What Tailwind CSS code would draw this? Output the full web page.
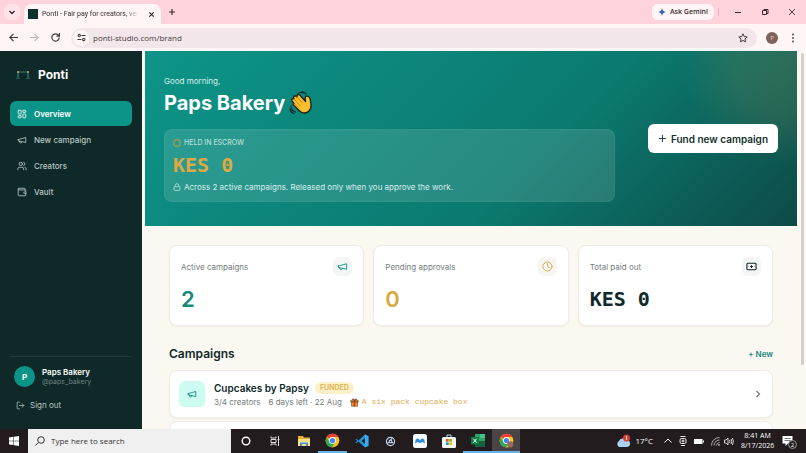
<!DOCTYPE html>
<html lang="en">
<head>
<meta charset="utf-8">
<meta name="viewport" content="width=device-width, initial-scale=1">
<title>Ponti - Fair pay for creators</title>
<script src="https://cdn.jsdelivr.net/npm/@tailwindcss/browser@4"></script>
</head>
<body class="flex h-screen flex-col overflow-hidden bg-[#fbf7f1] font-['Inter',sans-serif] text-[8px] leading-3 text-[#0f2a2a]">
<svg class="hidden" aria-hidden="true">
  <symbol id="megaphone" viewBox="0 0 24 24" fill="none" stroke="currentColor" stroke-width="2" stroke-linecap="round" stroke-linejoin="round"><path d="m3 11 18-5v12L3 14v-3z"/><path d="M11.600 16.800a3 3 0 1 1-5.800-1.600"/></symbol>
  <symbol id="chrome" viewBox="0 0 24 24"><circle cx="12" cy="12" r="11" fill="#fbc116"/><path d="M12 12 2.500 6.500A11 11 0 0 1 21.500 6.500H12z" fill="#ea4335"/><path d="M2.500 6.500A11 11 0 0 0 11 23l5.500-8.500L12 12 7 14z" fill="#34a853"/><circle cx="12" cy="12" r="5.500" fill="#fff"/><circle cx="12" cy="12" r="4.200" fill="#4285f4"/></symbol>
</svg>

<!-- Browser tabs -->
<header class="flex h-6 shrink-0 items-center bg-[#ffd3dc] pl-1 font-['Open_Sans','Noto_Sans',sans-serif] text-[#3b2a30]">
  <button aria-label="Search tabs" class="grid h-4 w-4 place-items-center rounded-md bg-[#ffe3e9]"><svg class="h-2 w-2" viewBox="0 0 8 8" fill="none" stroke="currentColor" stroke-width="1.400"><path d="m1.500 3 2.500 2.500L6.500 3"/></svg></button>
  <div class="ml-1 flex h-full w-[137px] items-end pt-1">
    <div class="flex h-full w-full items-center rounded-t-lg bg-[#fff5f6] pr-[6px] pl-1">
      <svg class="h-[10px] w-[10px] shrink-0" viewBox="0 0 10 10"><rect width="10" height="10" fill="#0c3230"/></svg>
      <span class="ml-1 mask-r-from-85% font-['Roboto',sans-serif] text-[7px] whitespace-nowrap">Ponti - Fair pay for creators, ver</span>
      <button aria-label="Close tab" class="ml-auto"><svg class="h-[7px] w-[7px]" viewBox="0 0 8 8" stroke="currentColor" stroke-width="1.400"><path d="m1.500 1.500 5 5m0-5-5 5"/></svg></button>
    </div>
  </div>
  <button aria-label="New tab" class="ml-[7px]"><svg class="h-2 w-2" viewBox="0 0 8 8" stroke="currentColor" stroke-width="1.200"><path d="M4 1v6M1 4h6"/></svg></button>
  <button class="ml-auto flex h-4 items-center gap-1 rounded-md bg-[#fff5f6] px-[6px] font-semibold text-[7px]"><svg class="h-2 w-2" viewBox="0 0 8 8"><path d="M4 0Q4.500 3.500 8 4 4.500 4.500 4 8 3.500 4.500 0 4 3.500 3.500 4 0" fill="#3567b5"/></svg>Ask Gemini</button>
  <span class="ml-1 h-2 w-px bg-[#e9b6c2]"></span>
  <div class="flex items-center gap-[19px] pr-[10px] pl-[15px]">
    <button aria-label="Minimize"><svg class="h-2 w-2" viewBox="0 0 8 8" stroke="currentColor"><path d="M1 4.500h6"/></svg></button>
    <button aria-label="Restore"><svg class="h-2 w-2" viewBox="0 0 8 8" fill="none" stroke="currentColor"><path d="M1.500 2.500h4v4h-4zM3 2.500v-1h4v4H5.500"/></svg></button>
    <button aria-label="Close"><svg class="h-2 w-2" viewBox="0 0 8 8" stroke="currentColor" stroke-width=".900"><path d="m1 1 6 6m0-6-6 6"/></svg></button>
  </div>
</header>

<!-- Address bar -->
<div class="flex h-[27px] shrink-0 items-center bg-[#fff5f6] pr-2 pl-2 font-['Open_Sans','Noto_Sans',sans-serif] text-[#463a3d]">
  <button aria-label="Back"><svg class="h-[11px] w-[11px]" viewBox="0 0 12 12" fill="none" stroke="currentColor" stroke-width="1.300"><path d="M11 6H2M6 2 2 6l4 4"/></svg></button>
  <button aria-label="Forward" class="ml-[10px] text-[#c3b5b9]"><svg class="h-[11px] w-[11px]" viewBox="0 0 12 12" fill="none" stroke="currentColor" stroke-width="1.300"><path d="M1 6h9M6 2l4 4-4 4"/></svg></button>
  <button aria-label="Reload" class="ml-[10px]"><svg class="h-[11px] w-[11px]" viewBox="0 0 12 12" fill="none" stroke="currentColor" stroke-width="1.300"><path d="M10 6a4 4 0 1 1-1.200-2.900L10 4.300M10.300 1.200v3.300H7"/></svg></button>
  <div class="ml-[10px] flex h-5 grow items-center rounded-full bg-[#f3e6ea] pr-[9px] pl-[2px]">
    <button aria-label="Site information" class="grid h-4 w-4 place-items-center rounded-full bg-[#fff5f6]"><svg class="h-[9px] w-[9px]" viewBox="0 0 10 10" fill="none" stroke="currentColor" stroke-width="1.200"><circle cx="2.500" cy="2.800" r="1.300"/><path d="M5 2.800h4.500M.500 7.200H5"/><circle cx="7.500" cy="7.200" r="1.300"/></svg></button>
    <input aria-label="Address" value="ponti-studio.com/brand" class="ml-1 h-4 min-w-0 grow bg-transparent pb-px text-[8px] outline-none">
    <button aria-label="Bookmark"><svg class="h-[10px] w-[10px]" viewBox="0 0 12 12" fill="none" stroke="currentColor" stroke-width="1.200" stroke-linejoin="round"><path d="m6 1 1.500 3.300 3.500.400-2.600 2.400.700 3.600L6 8.900l-3.100 1.800.700-3.600L1 4.700l3.500-.400z"/></svg></button>
  </div>
  <button aria-label="Profile" class="ml-[9px] grid h-3 w-3 place-items-center rounded-full bg-[#806258] text-[6px] text-[#e5cfc6]">P</button>
  <button aria-label="Menu" class="ml-[10px]"><svg class="h-[10px] w-[10px]" viewBox="0 0 10 10" fill="currentColor"><circle cx="5" cy="1.500" r=".900"/><circle cx="5" cy="5" r=".900"/><circle cx="5" cy="8.500" r=".900"/></svg></button>
</div>

<div class="flex min-h-0 grow">
  <!-- Sidebar -->
  <aside class="flex w-[142px] shrink-0 flex-col bg-[#0e2927] px-[10px] pt-4 pb-[18px] text-[#b9c6c3]">
    <a href="#" class="flex h-4 items-center gap-[8px] pl-[6px] text-[12px] font-bold text-white">
      <svg class="h-[10px] w-[14px]" viewBox="0 0 14 10" fill="none"><path d="M2 2h10" stroke="#377d68"/><path d="M2 2v6M12 2v6" stroke="#20786d" stroke-width="1.400"/><circle cx="2" cy="2" r="1" fill="#d9a544"/><circle cx="12" cy="2" r="1" fill="#d9a544"/><path d="M0 8.500h4m6 0h4" stroke="#28554e"/></svg>Ponti</a>
    <nav class="mt-[18px] flex flex-col gap-px font-medium">
      <a href="#" class="flex h-[25px] items-center gap-[7px] rounded-md bg-[#0d9488] px-[7px] font-semibold text-white"><svg class="h-[10px] w-[10px]" viewBox="0 0 24 24" fill="none" stroke="currentColor" stroke-width="2"><rect x="3" y="3" width="7" height="9" rx="1"/><rect x="14" y="3" width="7" height="5" rx="1"/><rect x="14" y="12" width="7" height="9" rx="1"/><rect x="3" y="16" width="7" height="5" rx="1"/></svg>Overview</a>
      <a href="#" class="flex h-[25px] items-center gap-[7px] px-[7px]"><svg class="h-[10px] w-[10px]"><use href="#megaphone"/></svg>New campaign</a>
      <a href="#" class="flex h-[25px] items-center gap-[7px] px-[7px]"><svg class="h-[10px] w-[10px]" viewBox="0 0 24 24" fill="none" stroke="currentColor" stroke-width="2" stroke-linecap="round"><circle cx="9" cy="7" r="4"/><path d="M2 21v-2a4 4 0 0 1 4-4h6a4 4 0 0 1 4 4v2M16 3.100a4 4 0 0 1 0 7.800M22 21v-2a4 4 0 0 0-3-3.900"/></svg>Creators</a>
      <a href="#" class="flex h-[25px] items-center gap-[7px] px-[7px]"><svg class="h-[10px] w-[10px]" viewBox="0 0 24 24" fill="none" stroke="currentColor" stroke-width="2" stroke-linecap="round" stroke-linejoin="round"><path d="M19 7V4a1 1 0 0 0-1-1H5a2 2 0 0 0 0 4h15a1 1 0 0 1 1 1v4h-3a2 2 0 0 0 0 4h3a1 1 0 0 0 1-1v-2a1 1 0 0 0-1-1M3 5v14a2 2 0 0 0 2 2h15a1 1 0 0 0 1-1v-4"/></svg>Vault</a>
    </nav>
    <div class="mt-auto border-t border-[#203c39] pt-[9px]">
      <div class="flex items-center gap-[7px] pl-1">
        <span class="grid h-[21px] w-[21px] place-items-center rounded-full bg-[#0d9488] font-bold text-white">P</span>
        <div class="leading-[10px]"><p class="font-semibold text-white">Paps Bakery</p><p class="text-[7px] text-[#71827f]">@paps_bakery</p></div>
      </div>
      <button class="mt-3 flex items-center gap-[5px] pl-[6px]"><svg class="h-[9px] w-[9px]" viewBox="0 0 24 24" fill="none" stroke="currentColor" stroke-width="2" stroke-linecap="round" stroke-linejoin="round"><path d="M9 21H5a2 2 0 0 1-2-2V5a2 2 0 0 1 2-2h4M16 17l5-5-5-5M21 12H9"/></svg>Sign out</button>
    </div>
  </aside>

  <main class="min-w-0 grow overflow-hidden pl-[3px]">
    <!-- Hero -->
    <section class="flex items-center gap-[33px] bg-[radial-gradient(circle_at_98%_8%,#d9a54426_0,#d9a5441f_50px,transparent_100px),linear-gradient(135deg,#0d9488_0%,#0b7a70_60%,#0d4a47_100%)] px-[19px] pt-6 pb-6 text-[#d8efeb]">
      <div class="grow">
        <p>Good morning,</p>
        <h1 class="mt-[2px] flex items-center gap-1 text-[20px] leading-7 font-bold text-white">Paps Bakery
          <svg class="h-6 w-6" viewBox="0 0 24 24" role="img" aria-label="Waving hand" stroke-linecap="round" stroke-linejoin="round"><path d="M9 3q2-2.500 5-1M12 1.200q3-.800 5 1.800M2 15q0 4.500 4.500 6M1 18q.800 3.500 4 4.500" fill="none" stroke="#17322f" stroke-width="1.300"/><path d="M5 12.500 3 9.800q-.800-1.800 1-2.300l1 .500-.400-1.500q0-2 2-1.500L8 6q-.500-2.500 1.500-2.500l1.500.800 5.500 6.200-.300-3.500q.500-2.500 2.500-1.800 2 .500 2.500 3L22 14q.500 3.500-2 6-3 3-7 1.500-2-.800-4-3L4 13.600q0-1.300 1-1.100z" fill="#fbbf2d" stroke="#1b211f" stroke-width="1.300"/><path d="m5 8 6 6.500M8 6l5.500 6M5 12.500l4 4" fill="none" stroke="#b77a16" stroke-width=".900"/></svg></h1>
        <div class="mt-3 rounded-lg border border-white/5 bg-white/12 px-2 pt-[7px] pb-[8px]">
          <p class="flex items-center gap-[3px] text-[7px] font-medium text-[#b9ded7]"><svg class="h-2 w-2" viewBox="0 0 8 8"><circle cx="4" cy="4" r="3.300" fill="none" stroke="#aaa24d" stroke-width="1.200"/></svg>HELD IN ESCROW</p>
          <p class="mt-1 mb-1 font-['DejaVu_Sans_Mono',monospace] text-[20px] leading-6 font-bold text-[#dfa943]">KES 0</p>
          <p class="flex items-center gap-[3px]"><svg class="h-2 w-2" viewBox="0 0 24 24" fill="none" stroke="currentColor" stroke-width="2"><rect x="3" y="11" width="18" height="11" rx="2"/><path d="M7 11V7a5 5 0 0 1 10 0v4"/></svg>Across 2 active campaigns. Released only when you approve the work.</p>
        </div>
      </div>
      <button class="flex h-[29px] shrink-0 items-center gap-1 rounded-md bg-white px-[10px] text-[10px] font-semibold text-[#12302d]"><svg class="h-[9px] w-[9px]" viewBox="0 0 10 10" stroke="currentColor"><path d="M5 1v8M1 5h8"/></svg>Fund new campaign</button>
    </section>

    <div class="px-6 pt-[19px]">
      <!-- Statistics -->
      <section class="grid grid-cols-3 gap-[9px]">
        <article class="rounded-lg border border-[#f1ece5] bg-white p-[11px] shadow-xs">
          <div class="flex items-center justify-between text-[#727c7b]"><h2>Active campaigns</h2><span class="grid h-[19px] w-[19px] place-items-center rounded-md bg-[#f3f6f5] text-[#0d9488]"><svg class="h-[11px] w-[11px]"><use href="#megaphone"/></svg></span></div>
          <p class="mt-2 text-[22px] leading-[30px] font-semibold text-[#17877b]">2</p>
        </article>
        <article class="rounded-lg border border-[#f1ece5] bg-white p-[11px] shadow-xs">
          <div class="flex items-center justify-between text-[#727c7b]"><h2>Pending approvals</h2><span class="grid h-[19px] w-[19px] place-items-center rounded-md bg-[#f6f5f1] text-[#dba943]"><svg class="h-[11px] w-[11px]" viewBox="0 0 24 24" fill="none" stroke="currentColor" stroke-width="2" stroke-linecap="round"><circle cx="12" cy="12" r="10"/><path d="M12 6v6l4 2"/></svg></span></div>
          <p class="mt-2 text-[22px] leading-[30px] font-semibold text-[#d6aa3f]">0</p>
        </article>
        <article class="rounded-lg border border-[#f1ece5] bg-white p-[11px] shadow-xs">
          <div class="flex items-center justify-between text-[#727c7b]"><h2>Total paid out</h2><span class="grid h-[19px] w-[19px] place-items-center rounded-md bg-[#f3f5f4] text-[#0f2a2a]"><svg class="h-[11px] w-[11px]" viewBox="0 0 24 24" fill="none" stroke="currentColor" stroke-width="2.400"><rect x="2" y="5" width="20" height="14" rx="2"/><path d="M12 9v6M9 12h6M5.500 12h.500m12 0h.500"/></svg></span></div>
          <p class="mt-2 font-['DejaVu_Sans_Mono',monospace] text-[20px] leading-[30px] font-bold">KES 0</p>
        </article>
      </section>

      <!-- Campaigns -->
      <div class="mt-5 flex items-center justify-between"><h2 class="text-[12px] leading-4 font-semibold">Campaigns</h2><a href="#" class="text-[8px] font-semibold text-[#17877b]">+ New</a></div>
      <section class="mt-2 flex flex-col gap-[3px]">
        <a href="#" class="flex h-12 items-center rounded-lg border border-[#f1ece5] bg-white px-[9px] shadow-xs">
          <span class="grid h-[26px] w-[26px] shrink-0 place-items-center rounded-md bg-[#ccfbf1] text-[#0d8077]"><svg class="h-[10px] w-[10px]"><use href="#megaphone"/></svg></span>
          <div class="ml-[9px]">
            <div class="flex items-center gap-[6px]"><h3 class="text-[10px] leading-4 font-semibold">Cupcakes by Papsy</h3><span class="rounded-full bg-[#fdf0c9] px-[5px] text-[7px] font-semibold text-[#deb04e]">FUNDED</span></div>
            <p class="flex items-center gap-2 text-[#727c7b]"><span>3/4 creators</span><span>6 days left · 22 Aug</span>
              <span class="flex items-center gap-[3px] font-['Liberation_Mono',monospace] text-[#dfac51]"><svg class="h-[9px] w-[9px]" viewBox="0 0 12 12" role="img" aria-label="Gift"><path d="M2 5h8v6H2zM1 3h10v2.500H1z" fill="#e99528" stroke="#593b22" stroke-width=".700"/><path d="M6 3v8" stroke="#c9352e" stroke-width="1.800"/><path d="M6 3Q2 2.500 3.500 1 5 .500 6 3q1-2.500 2.500-2Q10 2.500 6 3" fill="#e34c32" stroke="#6a3620" stroke-width=".600"/></svg>A six pack cupcake box</span></p>
          </div>
          <svg class="ml-auto h-[10px] w-[10px] text-[#727c7b]" viewBox="0 0 10 10" fill="none" stroke="currentColor" stroke-width="1.200"><path d="m3.500 2 3 3-3 3"/></svg>
        </a>
        <a href="#" aria-label="Next campaign" class="block h-12 rounded-lg border border-[#f1ece5] bg-white"></a>
      </section>
    </div>
  </main>
  <div class="flex w-[9px] shrink-0 flex-col items-end pt-[2px] pr-[2px]"><span class="h-[83%] w-[3px] rounded-full bg-[#d5cccb]"></span></div>
</div>

<!-- Taskbar -->
<footer class="flex h-6 shrink-0 items-center bg-[#221c1e] font-['Open_Sans','Noto_Sans',sans-serif] text-white">
  <button aria-label="Start" class="grid h-full w-7 place-items-center"><svg class="h-[10px] w-[10px]" viewBox="0 0 10 10" fill="currentColor"><path d="M0 1.400 4.500.800v3.900H0zM5 .700 10 0v4.700H5zM0 5.200h4.500v3.900L0 8.500zM5 5.200h5V10L5 9.200z"/></svg></button>
  <label class="flex h-full w-[203px] items-center gap-[6px] bg-[#f1f0f0] pl-[7px] text-[#343434]"><svg class="h-[10px] w-[10px]" viewBox="0 0 10 10" fill="none" stroke="currentColor"><circle cx="6" cy="4" r="3.300"/><path d="M3.500 6.500.500 9.500"/></svg><input aria-label="Search Windows" placeholder="Type here to search" class="min-w-0 grow bg-transparent text-[8px] placeholder:text-[#343434]"></label>
  <div class="flex h-full">
    <button aria-label="Cortana" class="grid w-[29px] place-items-center"><svg class="h-[10px] w-[10px]" viewBox="0 0 10 10"><circle cx="5" cy="5" r="3.800" fill="none" stroke="#fff" stroke-width="1.400"/></svg></button>
    <button aria-label="Task view" class="grid w-[29px] place-items-center"><svg class="h-[10px] w-[10px]" viewBox="0 0 10 10" fill="none" stroke="#ddd"><path d="M1 .500v1.500h5V.500M1 3.500h5v3H1zM1 9.500V8h5v1.500M8.500 0v10M7.500 3.500h2"/></svg></button>
    <button aria-label="File Explorer" class="grid w-[29px] place-items-center"><svg class="h-3 w-[14px]" viewBox="0 0 14 12"><path d="M1 1h5l1 1.500h6V11H1z" fill="#e9ae35"/><path d="M1 4h12v7H1z" fill="#ffe08a"/><path d="M3 11V7.500h8V11H9V9H5v2z" fill="#4293d1"/></svg></button>
    <button aria-label="Chrome" class="grid w-[29px] place-items-center border-b-2 border-[#69b2e8] px-[2px]"><svg class="h-[15px] w-[15px]"><use href="#chrome"/></svg></button>
    <button aria-label="Visual Studio Code" class="grid w-[29px] place-items-center"><svg class="h-[14px] w-[14px]" viewBox="0 0 24 24"><path d="m17 1 6 3v16l-6 3L6 13l-4 3-1.500-1L4 12 .500 9 2 8l4 3zm0 6-6 5 6 5z" fill="#2594df" fill-rule="evenodd"/><path d="m17 1 6 3v16l-6 3z" fill="#3ba9f1"/></svg></button>
    <button aria-label="Compass app" class="grid w-[29px] place-items-center"><svg class="h-[11px] w-[11px]" viewBox="0 0 12 12" fill="none" stroke="#c6d5ec" stroke-width="1.200"><circle cx="6" cy="6" r="4.500"/><circle cx="6" cy="6" r="1.500"/><path d="m6 4.500 2-2M4.700 6.800 2.500 8m4.800-1.200L9.500 8"/></svg></button>
    <button aria-label="Messaging app" class="grid w-[29px] place-items-center"><svg class="h-[14px] w-[14px]" viewBox="0 0 14 14"><rect width="14" height="14" rx="2.500" fill="#f5faff"/><path d="M2 9.500q.500-5 2.500-5 1.500 0 2.500 2 1-2 2.500-2 2 0 2.500 5L9.500 8 7 9 4.500 8z" fill="#318bd3"/></svg></button>
    <button aria-label="Microsoft Store" class="grid w-[29px] place-items-center"><svg class="h-[14px] w-[14px]" viewBox="0 0 14 14"><path d="M5 3V1h4v2" fill="none" stroke="#b8d7e6"/><rect y="3" width="14" height="11" rx="1.500" fill="#f5f5f5"/><path d="M4 5h2.700v2.700H4z" fill="#f25022"/><path d="M7.300 5H10v2.700H7.300z" fill="#7fba00"/><path d="M4 8.300h2.700V11H4z" fill="#00a4ef"/><path d="M7.300 8.300H10V11H7.300z" fill="#ffb900"/></svg></button>
    <button aria-label="Excel" class="grid w-[29px] place-items-center border-b-2 border-[#69b2e8]"><svg class="h-[13px] w-[14px]" viewBox="0 0 14 13"><path d="M4 0h10v13H4z" fill="#2ba36a"/><path d="M9 0h5v4H9z" fill="#40c487"/><path d="M4 7h10v6H4z" fill="#16613b"/><path d="M0 3h8v7.500H0z" fill="#107c41"/><path d="m2.300 4.700 3.400 4m0-4-3.400 4" stroke="#fff"/></svg></button>
    <button aria-label="Chrome profile" class="grid w-[28px] place-items-center border-b-2 border-[#69b2e8] bg-[#4a4446]"><svg class="h-[15px] w-[15px]" viewBox="0 0 24 24"><use href="#chrome"/><circle cx="18" cy="18" r="5" fill="#9a6959"/></svg></button>
  </div>
  <div class="ml-auto flex h-full items-center gap-1 pr-[9px]">
    <svg class="h-[15px] w-4" viewBox="0 0 16 15" role="img" aria-label="Weather"><path d="M4 13a3.500 3.500 0 0 1 0-6 4 4 0 0 1 7-1 3.500 3.500 0 1 1 1 7z" fill="#a9d1f5"/><circle cx="11.500" cy="4" r="3.500" fill="#d93d2d"/><path d="M11.500 2v4" stroke="#fff" stroke-width=".800"/></svg>
    <span class="mr-1">17°C</span>
    <svg class="ml-[3px] h-2 w-2" viewBox="0 0 8 8" fill="none" stroke="#fff"><path d="m.500 5.500 3.500-3.500 3.500 3.500"/></svg>
    <svg class="ml-[3px] h-[10px] w-2" viewBox="0 0 8 10" fill="none" stroke="#fff" stroke-width=".900"><rect x="1" y="2.500" width="6" height="5" rx="1.500"/><circle cx="4" cy="5" r="1"/><path d="M1.500.500h5M2 9.500h4"/></svg>
    <svg class="ml-[3px] h-[7px] w-[10px]" viewBox="0 0 10 7"><path d="M0 1h8.500v5H0zM9 2.500h1v2H9z" fill="#fff"/></svg>
    <svg class="ml-[3px] h-[9px] w-[9px]" viewBox="0 0 9 9" fill="none" stroke="#bbb" stroke-width=".900"><path d="M.500 8.500Q1 1 8.500.500M3 8.500Q3.500 3.500 8.500 3M5.500 8.500q.200-2.800 3-3"/><circle cx="8" cy="8" r=".600"/></svg>
    <svg class="h-[9px] w-[10px]" viewBox="0 0 10 9" fill="none" stroke="#fff" stroke-width=".800"><path d="M.500 3h1.500l2-2v7L2 6H.500zM5.500 3q1 1.500 0 3M7 2q1.800 2.500 0 5M8.300 1q2.500 3.500 0 7"/></svg>
    <time class="ml-[3px] w-[33px] text-center text-[7px] leading-[10px] whitespace-nowrap">8:41 AM<br>8/17/2026</time>
    <button aria-label="Notifications" class="relative ml-1 h-4 w-[15px]"><svg class="h-3 w-3" viewBox="0 0 12 12"><path d="M.500 1h10v7.500H6L3.500 11V8.500h-3z" fill="#fff"/><path d="M2.500 3.500h6M2.500 5.500h6" stroke="#555" stroke-width=".800"/></svg><span class="absolute right-0 bottom-0 grid h-[9px] w-[9px] place-items-center rounded-full border border-[#999] bg-[#221c1e] text-[6px] leading-none">2</span></button>
  </div>
</footer>
</body>
</html>
